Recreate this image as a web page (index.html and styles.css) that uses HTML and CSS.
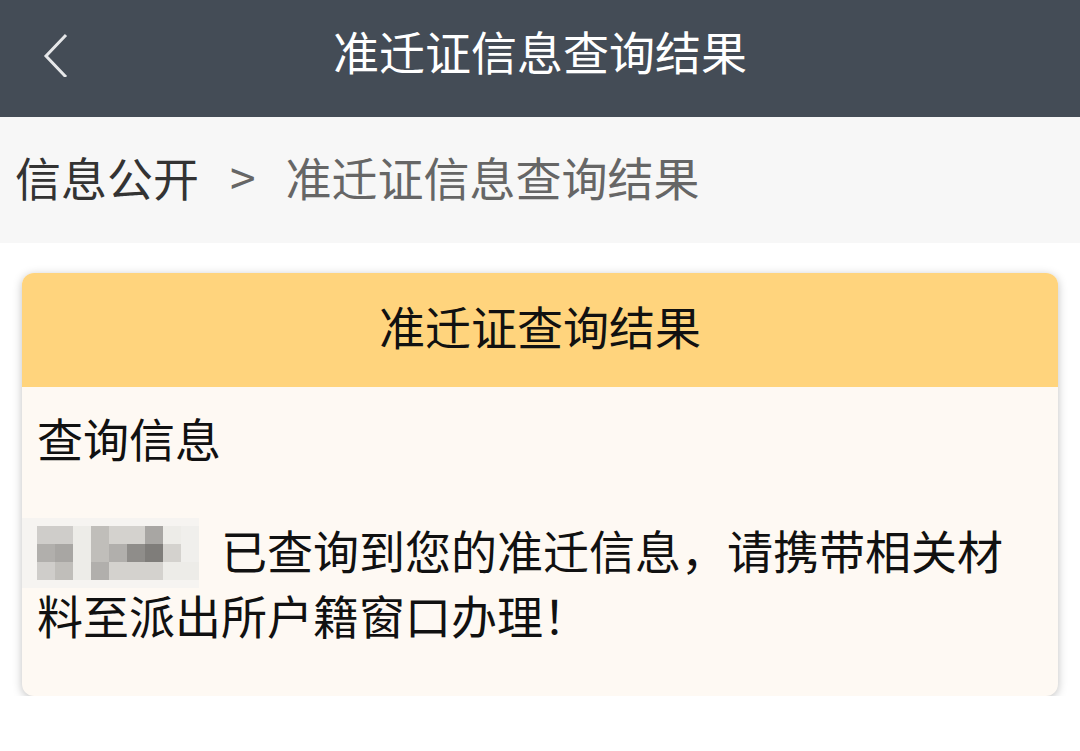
FILE: index.html
```html
<!DOCTYPE html>
<html lang="zh-CN">
<head>
  <meta charset="UTF-8" />
  <meta name="viewport" content="width=device-width, initial-scale=1.0"/>
  <title>准迁证信息查询结果</title>
  <link rel="stylesheet" href="styles.css">
</head>
<body>

<header class="topbar">
  <a class="back" href="#">
    <svg width="30" height="48" viewBox="0 0 30 48">
      <polyline points="24,6 4,27 24,48" fill="none" stroke="#e6e7e9" stroke-width="3" />
    </svg>
  </a>
  <h1>准迁证信息查询结果</h1>
</header>

<!-- Breadcrumb -->
<nav class="crumbs">
  <a href="#">信息公开</a>
  <span class="sep">&gt;</span>
  <span class="current">准迁证信息查询结果</span>
</nav>

<!-- Result card -->
<section class="card">
  <h2>准迁证查询结果</h2>
  <div class="card-body">
    <p class="label">查询信息</p>
    <p class="msg"><span class="mask"><span class="pixels">
        <i class="c3"></i><i class="c3"></i><i class="c1"></i><i class="c4"></i><i class="c2"></i><i class="c2"></i><i class="c6"></i><i class="c1"></i><i class="c0"></i>
        <i class="c5"></i><i class="c6"></i><i class="c1"></i><i class="c4"></i><i class="c5"></i><i class="c7"></i><i class="c8"></i><i class="c2"></i><i class="c0"></i>
        <i class="c3"></i><i class="c4"></i><i class="c1"></i><i class="c5"></i><i class="c2"></i><i class="c2"></i><i class="c2"></i><i class="c1"></i><i class="c1"></i>
      </span></span>已查询到您的准迁信息，请携带相关材<br>料至派出所户籍窗口办理！</p>
  </div>
</section>

</body>
</html>
```

FILE: styles.css
```css
body {
  font-family: "Noto Sans CJK SC", "Noto Sans", sans-serif;
  margin: 0;
  background: #fff;
  color: #111;
}

.topbar {
  background: #444c56;
  height: 117px;
  display: flex;
  align-items: center;
  justify-content: center;
  position: relative;
}

.topbar h1 {
  margin: 0 0 18px;
  font-size: 46px;
  font-weight: 400;
  color: #fff;
  line-height: 1;
}

.back {
  position: absolute;
  left: 42px;
  top: 29px;
}

.crumbs {
  background: #f7f7f7;
  height: 126px;
  box-sizing: border-box;
  display: flex;
  align-items: center;
  padding: 0 0 8px 15px;
  font-size: 46px;
  line-height: 1;
}

.crumbs a {
  color: #333;
  text-decoration: none;
}

.crumbs .sep {
  color: #666;
  margin: 0 30px 0 31px;
}

.crumbs .current {
  color: #666;
}

.card {
  margin: 30px 22px 0;
  border-radius: 12px;
  overflow: hidden;
  background: #fef9f3;
  box-shadow: 0 2px 10px rgba(0, 0, 0, 0.25);
}

.card h2 {
  margin: 0;
  background: #ffd47d;
  height: 114px;
  box-sizing: border-box;
  padding-bottom: 10px;
  display: flex;
  align-items: center;
  justify-content: center;
  font-size: 46px;
  font-weight: 400;
  line-height: 1;
}

.card-body {
  padding: 27px 15px 49px;
  font-size: 46px;
}

.label {
  margin: 0 0 57px;
  line-height: 1;
}

.msg {
  margin: 0;
  line-height: 65px;
}

.mask {
  display: inline-block;
  overflow: hidden;
  vertical-align: -11px;
  margin-right: 22px;
  background: #f4f2ef;
  box-shadow: -8px 0 0 8px #f6f4f1;
}

.pixels {
  display: grid;
  grid-template-columns: repeat(9, 18px);
  grid-template-rows: repeat(3, 18px);
}

.pixels i { display: block; }
.c0 { background: #f0efec; }
.c1 { background: #edece8; }
.c2 { background: #d4d2ce; }
.c3 { background: #cfcdca; }
.c4 { background: #c0beba; }
.c5 { background: #b1afac; }
.c6 { background: #a8a6a3; }
.c7 { background: #8f8d8a; }
.c8 { background: #7f7d7a; }
```
